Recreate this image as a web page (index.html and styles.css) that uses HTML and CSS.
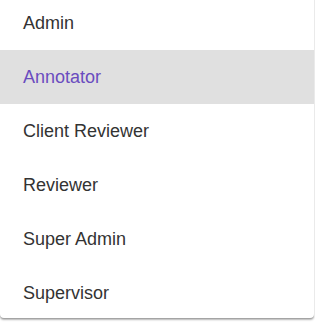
FILE: index.html
```html
<!DOCTYPE html>
<html>
<head>
<meta charset="utf-8">
<link rel="stylesheet" href="styles.css">
</head>
<body>
<ul class="menu">
  <li class="item">Admin</li>
  <li class="item selected">Annotator</li>
  <li class="item">Client Reviewer</li>
  <li class="item">Reviewer</li>
  <li class="item">Super Admin</li>
  <li class="item">Supervisor</li>
</ul>
</body>
</html>
```
FILE: styles.css
```css
html, body {
  margin: 0;
  padding: 0;
  background: #ffffff;
}
body {
  width: 315px;
  height: 322px;
  overflow: hidden;
}
.menu {
  list-style: none;
  margin: -4px 0 0 0;
  padding: 0;
  width: 314px;
  height: 322px;
  overflow: hidden;
  background: #ffffff;
  border-radius: 0 0 4px 4px;
  box-shadow: 0 2px 2px rgba(0, 0, 0, 0.28), 0 1px 1px rgba(0, 0, 0, 0.14);
  font-family: "Liberation Sans", Arial, sans-serif;
  font-size: 18px;
  color: #333333;
}
.item {
  height: 54px;
  display: flex;
  align-items: center;
  padding: 0 0 0 23px;
  box-sizing: border-box;
  line-height: 22px;
}
.item.selected {
  background: #e0e0e0;
  color: #6a4cbf;
}
```
